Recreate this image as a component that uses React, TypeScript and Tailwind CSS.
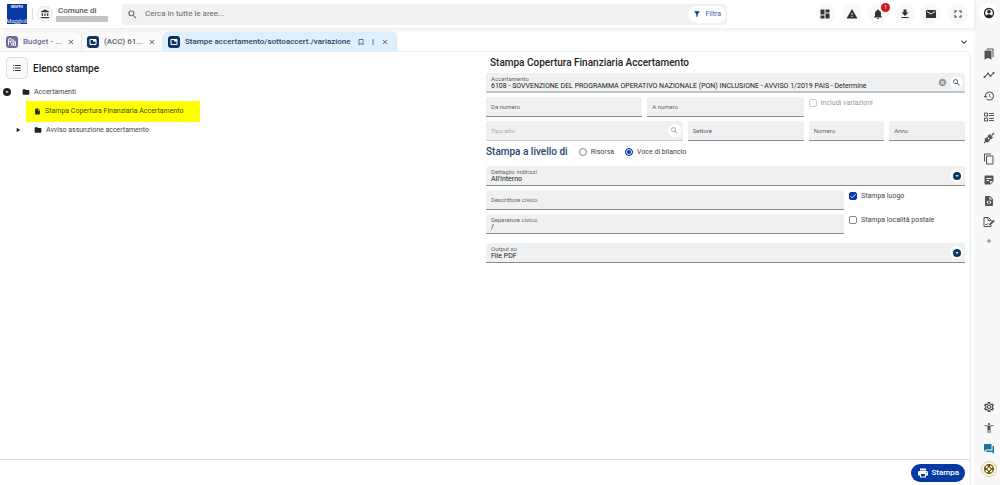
import { useState } from 'react';
import type { ReactNode } from 'react';
import {
  MdAccessibilityNew,
  MdAccountBalance,
  MdAdd,
  MdArrowDropDown,
  MdBookmarkBorder,
  MdBookmarks,
  MdCancel,
  MdCheck,
  MdClose,
  MdContentCopy,
  MdDashboard,
  MdEmail,
  MdFileDownload,
  MdFilterAlt,
  MdFolder,
  MdFormatListBulleted,
  MdForum,
  MdFullscreen,
  MdHistory,
  MdInsertDriveFile,
  MdKeyboardArrowDown,
  MdMoreVert,
  MdNotifications,
  MdOutlineSettings,
  MdPlayArrow,
  MdPrint,
  MdSearch,
  MdStickyNote2,
  MdSupport,
  MdTimeline,
  MdWarning,
} from 'react-icons/md';

function AccountIcon() {
  return (
    <svg viewBox="0 0 24 24" className="size-3">
      <circle cx="12" cy="12" r="9" fill="none" stroke="currentColor" strokeWidth="2.600" />
      <circle cx="12" cy="9.500" r="3.600" fill="currentColor" />
      <path d="M5 18q3-3.500 7-3.500t7 3.500q-3 3-7 3t-7-3z" fill="currentColor" />
    </svg>
  );
}

function PlugIcon() {
  return (
    <svg viewBox="0 0 24 24" className="size-3" fill="currentColor">
      <path d="M13 4 20 11 17 14Q15 15 13.500 13.500L10.500 10.500Q9 9 10 7Z" />
      <path d="M4 13 6.500 10.500 13.500 17.500 11 20Q8 22 5 19Q2 16 4 13Z" />
      <path
        d="M17 7 22 2M6 18 2 22M8 12.500 10.500 10M11.500 16 14 13.500"
        fill="none"
        stroke="currentColor"
        strokeWidth="2.400"
      />
    </svg>
  );
}

function BallotIcon() {
  return (
    <svg viewBox="0 0 24 24" className="size-3" fill="none" stroke="currentColor" strokeWidth="2">
      <path d="M3 4h6v6H3zM3 14h6v6H3zM12 5h10M12 9h10M12 15h10M12 19h10" />
    </svg>
  );
}

function FileCodeIcon() {
  return (
    <svg viewBox="0 0 24 24" className="size-3" fill="currentColor" fillRule="evenodd">
      <path d="M5 2h9l6 6v12a2 2 0 0 1-2 2H6a2 2 0 0 1-2-2V4a2 2 0 0 1 1-2zM13 3.500V9h5.500zM10.500 11 7 14.500l3.500 3.500 1.200-1.200-2.300-2.300 2.300-2.300zM13.500 11l-1.200 1.200 2.300 2.300-2.300 2.300 1.200 1.200L17 14.500z" />
    </svg>
  );
}

function FileSignIcon() {
  return (
    <svg viewBox="0 0 24 24" className="size-3" fill="none" stroke="currentColor" strokeWidth="2">
      <path d="M16 10V8l-5-5H2v18h14v-3M10 3v6h6M5 17h3l2-2 2 2h3" />
      <path d="M14 16.500 22 9" strokeWidth="4" />
    </svg>
  );
}

function BookIcon() {
  return (
    <svg viewBox="0 0 24 24" className="size-3 shrink-0">
      <rect width="24" height="24" rx="6" fill="#6f6a98" />
      <path
        d="M5 19V8q0-3 3-3t3 3-3 3H5M8 11l3 4v4M14 6v13M14 12q0-2 2.500-2t2.500 2v7h-2.500q-2.500 0-2.500-2.500t2.500-2.500H19"
        fill="none"
        stroke="#fff"
        strokeWidth="1.800"
      />
    </svg>
  );
}

function FolderBadge() {
  return (
    <svg viewBox="0 0 24 24" className="size-3 shrink-0">
      <rect width="24" height="24" rx="6" fill="#0c3564" />
      <path d="M6 7h12v10H6z" fill="none" stroke="#fff" strokeWidth="2" strokeLinejoin="round" />
      <path d="M12 7h6v4h-6z" fill="#fff" />
    </svg>
  );
}

function Header() {
  const actions = [
    { name: 'Dashboard', icon: <MdDashboard /> },
    { name: 'Avvisi', icon: <MdWarning /> },
    { name: 'Notifiche', icon: <MdNotifications />, badge: '1' },
    { name: 'Download', icon: <MdFileDownload /> },
    { name: 'Messaggi', icon: <MdEmail /> },
    { name: 'Schermo intero', icon: <MdFullscreen /> },
  ];

  return (
    <header className="relative flex h-7 items-center bg-white pr-[6px] pl-[7px] shadow-[0_1px_5px_rgba(0,0,0,0.1)]">
      <div className="flex h-5 w-5 flex-col items-center justify-between overflow-hidden bg-[#0639a3] text-white">
        <span className="pt-px text-[3px] leading-[4px] font-bold">GRUPPO</span>
        <span className="font-['Liberation_Serif',serif] text-[6px] leading-[6px]">Maggioli</span>
      </div>
      <div className="ml-[5px] h-3 w-px bg-[#dddddd]" />
      <div className="ml-1 flex size-4 items-center justify-center rounded-full border border-[#e2e2e2] text-[#333]">
        <MdAccountBalance className="size-[10px]" />
      </div>
      <div className="ml-[3px] w-[66px]">
        <p className="pl-[2px] text-[8px] leading-[9px] font-medium text-[#555]">Comune di</p>
        <div className="mt-px h-[6px] w-[52px] bg-[#c4c4c4]" />
      </div>
      <div className="flex h-[21px] max-w-[605px] flex-1 items-center rounded-[4px] bg-[#f1f2f3] pr-px pl-[5px]">
        <MdSearch className="size-[11px] text-[#555]" />
        <input
          aria-label="Cerca"
          placeholder="Cerca in tutte le aree..."
          className="ml-[7px] min-w-0 flex-1 text-[8px] outline-none placeholder:text-[#666]"
        />
        <button className="flex h-[17px] items-center gap-1 rounded-full bg-white px-[5px] text-[7px] text-[#3c5ba5]">
          <MdFilterAlt className="size-2 text-[#0639a3]" />
          Filtra
        </button>
      </div>
      <div className="ml-auto flex w-[153px] justify-between">
        {actions.map((a) => (
          <button
            key={a.name}
            aria-label={a.name}
            className="relative flex size-5 items-center justify-center rounded-full bg-[#f8f8f8] text-[12px] text-[#333]"
          >
            {a.icon}
            {a.badge ? (
              <span className="absolute -top-px right-[-2px] flex size-[9px] items-center justify-center rounded-full bg-[#d01717] text-[5px] leading-none text-white">
                {a.badge}
              </span>
            ) : null}
          </button>
        ))}
      </div>
    </header>
  );
}

interface TabProps {
  icon: ReactNode;
  title: string;
  active?: boolean;
  muted?: boolean;
}

function Tab({ icon, title, active, muted }: TabProps) {
  return (
    <div
      className={`flex h-[19px] items-center rounded-t-[5px] pl-[5px] shadow-[1px_0_2px_rgba(0,0,0,0.12)] ${
        active ? 'w-[233px] bg-[#deeffd] pr-[7px]' : 'w-20 bg-[#fafafa] pr-[6px]'
      }`}
    >
      {icon}
      <button
        className={`ml-[5px] flex-1 text-left text-[8px] font-medium whitespace-nowrap ${
          active ? 'text-[#25476a]' : muted ? 'text-[#6f6a98]' : 'text-[#54616e]'
        }`}
      >
        {title}
      </button>
      {active ? (
        <div className="mr-1 flex gap-1 text-[8px] text-[#25476a]">
          <button aria-label="Segnalibro">
            <MdBookmarkBorder />
          </button>
          <button aria-label="Altro">
            <MdMoreVert />
          </button>
        </div>
      ) : null}
      <button aria-label="Chiudi" className="text-[8px] text-[#44576b]">
        <MdClose />
      </button>
    </div>
  );
}

function Tree() {
  return (
    <section className="pt-[5px] pl-[6px]">
      <div className="flex items-center gap-[5px]">
        <button
          aria-label="Elenco"
          className="flex size-[22px] items-center justify-center rounded-[4px] border border-[#dedede] bg-[#fafafa] text-[#333]"
        >
          <MdFormatListBulleted className="size-[10px]" />
        </button>
        <h2 className="text-[10px] font-medium text-[#222]">Elenco stampe</h2>
      </div>
      <ul className="mt-1 text-[7px] text-[#444]">
        <li className="flex h-[18px] items-center">
          <button
            aria-label="Comprimi"
            className="-ml-[3px] flex size-2 items-center justify-center rounded-full bg-[#222] text-white"
          >
            <MdArrowDropDown className="size-2" />
          </button>
          <MdFolder className="ml-[11px] size-2 text-[#222]" />
          <span className="ml-1">Accertamenti</span>
        </li>
        <li className="ml-5 flex h-[21px] w-[174px] items-center bg-[#ffff00] pl-2 text-[#3f4a00]">
          <MdInsertDriveFile className="size-[7px] text-[#183000]" />
          <a href="#stampa" className="ml-1">
            Stampa Copertura Finanziaria Accertamento
          </a>
        </li>
        <li className="flex h-4 items-center pl-2">
          <MdPlayArrow className="size-2 text-[#222]" />
          <MdFolder className="ml-3 size-2 text-[#222]" />
          <span className="ml-1">Avviso assunzione accertamento</span>
        </li>
      </ul>
    </section>
  );
}

interface FieldProps {
  label: string;
  value?: string;
  className: string;
  disabled?: boolean;
  children?: ReactNode;
}

function Field({ label, value, className, disabled, children }: FieldProps) {
  return (
    <div
      className={`flex h-5 items-center rounded-t-[3px] border-b bg-[#eef0f1] pr-[2px] pl-[5px] ${
        disabled ? 'border-[#cfcfcf]' : 'border-[#888b90]'
      } ${className}`}
    >
      {value ? (
        <label className="flex min-w-0 flex-1 flex-col text-[6px] leading-[7px] text-[#666]">
          {label}
          <input defaultValue={value} className="h-2 w-full text-[7px] leading-2 text-[#222] outline-none" />
        </label>
      ) : (
        <input
          aria-label={label}
          placeholder={label}
          disabled={disabled}
          className={`w-full min-w-0 flex-1 text-[6px] outline-none ${
            disabled ? 'placeholder:text-[#aaa]' : 'placeholder:text-[#666]'
          }`}
        />
      )}
      {children}
    </div>
  );
}

function SelectField({ label, options, className }: { label: string; options: string[]; className: string }) {
  return (
    <label
      className={`relative flex h-5 flex-col justify-center rounded-t-[3px] border-b border-[#888b90] bg-[#eef0f1] pl-[5px] text-[6px] leading-[7px] text-[#666] ${className}`}
    >
      {label}
      <select className="h-2 w-full appearance-none text-[7px] leading-2 text-[#222] outline-none">
        {options.map((o) => (
          <option key={o}>{o}</option>
        ))}
      </select>
      <span className="pointer-events-none absolute top-[3px] right-[2px] flex size-[13px] items-center justify-center rounded-full bg-white">
        <span className="flex size-2 items-center justify-center rounded-full bg-[#0c3564] text-white">
          <MdArrowDropDown className="size-2" />
        </span>
      </span>
    </label>
  );
}

function CheckField({ label, checked, disabled }: { label: string; checked?: boolean; disabled?: boolean }) {
  return (
    <label
      className={`flex h-3 items-center gap-1 text-[7px] whitespace-nowrap ${
        disabled ? 'text-[#999]' : 'text-[#444]'
      }`}
    >
      <span className="relative flex size-2">
        <input
          type="checkbox"
          defaultChecked={checked}
          disabled={disabled}
          className="peer size-2 appearance-none rounded-[2px] border border-[#888] checked:border-[#0639a3] checked:bg-[#0639a3] disabled:border-[#ccc]"
        />
        <MdCheck className="pointer-events-none absolute inset-0 hidden size-2 text-white peer-checked:block" />
      </span>
      {label}
    </label>
  );
}

function PrintForm() {
  const [level, setLevel] = useState('Voce di bilancio');

  return (
    <form className="pr-[5px] pl-px" onSubmit={(e) => e.preventDefault()}>
      <h2 className="pt-1 pl-1 text-[10px] leading-[14px] font-medium text-[#222]">
        Stampa Copertura Finanziaria Accertamento
      </h2>
      <div className="mt-[3px] grid grid-cols-12 gap-x-[5px] gap-y-1">
        <Field
          label="Accertamento"
          value="6108 - SOVVENZIONE DEL PROGRAMMA OPERATIVO NAZIONALE (PON) INCLUSIONE - AVVISO 1/2019 PAIS - Determine"
          className="col-span-12 border-b-2 !border-[#c2c3c5]"
        >
          <button aria-label="Cancella">
            <MdCancel className="size-[9px] text-[#999]" />
          </button>
          <button
            aria-label="Cerca accertamento"
            className="ml-[3px] flex size-[13px] items-center justify-center rounded-full bg-white"
          >
            <MdSearch className="size-[9px] text-[#25476a]" />
          </button>
        </Field>
        <Field label="Da numero" className="col-span-4" />
        <Field label="A numero" className="col-span-4" />
        <div className="col-span-4">
          <CheckField label="Includi variazioni" disabled />
        </div>
        <Field label="Tipo atto" className="col-span-5" disabled>
          <button
            aria-label="Cerca tipo atto"
            disabled
            className="flex size-[13px] items-center justify-center rounded-full bg-white"
          >
            <MdSearch className="size-[9px] text-[#999]" />
          </button>
        </Field>
        <Field label="Settore" className="col-span-3" />
        <Field label="Numero" className="col-span-2" />
        <Field label="Anno" className="col-span-2" />
      </div>

      <fieldset className="mt-1 flex h-[14px] items-center text-[7px] text-[#444]">
        <legend className="float-left mr-[11px] text-[10px] leading-[14px] font-medium text-[#25476a]">
          Stampa a livello di
        </legend>
        {['Risorsa', 'Voce di bilancio'].map((name) => (
          <label key={name} className="mr-[11px] flex items-center gap-1">
            <input
              type="radio"
              name="level"
              checked={level === name}
              onChange={() => setLevel(name)}
              className="size-2 appearance-none rounded-full border border-[#888] checked:border-[#0639a3] checked:bg-[#0639a3] checked:shadow-[inset_0_0_0_1px_#fff]"
            />
            {name}
          </label>
        ))}
      </fieldset>

      <div className="mt-[7px] grid grid-cols-12 gap-x-[5px] gap-y-1">
        <SelectField label="Dettaglio indirizzi" options={["All'interno"]} className="col-span-12" />
        <Field label="Descrittore civico" className="col-span-9" />
        <div className="col-span-3">
          <CheckField label="Stampa luogo" checked />
        </div>
        <Field label="Separatore civico" value="/" className="col-span-9" />
        <div className="col-span-3">
          <CheckField label="Stampa località postale" />
        </div>
        <SelectField label="Output su" options={['File PDF']} className="col-span-12 mt-[5px]" />
      </div>
    </form>
  );
}

function SideBar() {
  const tools = [
    { name: 'Segnalibri', icon: <MdBookmarks /> },
    { name: 'Andamento', icon: <MdTimeline /> },
    { name: 'Cronologia', icon: <MdHistory /> },
    { name: 'Attività', icon: <BallotIcon /> },
    { name: 'Collegamenti', icon: <PlugIcon /> },
    { name: 'Copia', icon: <MdContentCopy /> },
    { name: 'Note', icon: <MdStickyNote2 /> },
    { name: 'Codice', icon: <FileCodeIcon /> },
    { name: 'Firma', icon: <FileSignIcon /> },
  ];

  return (
    <aside className="flex w-[26px] shrink-0 flex-col items-center bg-[#f8f8f8] pl-[3px] text-[12px] text-[#555]">
      <button
        aria-label="Profilo"
        className="mt-[3px] flex size-5 items-center justify-center rounded-full bg-white text-[#222]"
      >
        <AccountIcon />
      </button>
      <div className="mt-5 flex flex-col">
        {tools.map((t) => (
          <button key={t.name} aria-label={t.name} className="flex h-[21px] items-center">
            {t.icon}
          </button>
        ))}
        <button aria-label="Aggiungi" className="flex h-[18px] items-center justify-center text-[8px] text-[#0c4594]">
          <MdAdd />
        </button>
      </div>
      <div className="mt-auto mb-2 flex flex-col items-center">
        <button aria-label="Impostazioni" className="flex h-[21px] items-center text-[#333]">
          <MdOutlineSettings />
        </button>
        <button aria-label="Accessibilità" className="flex h-[21px] items-center">
          <MdAccessibilityNew />
        </button>
        <button aria-label="Chat" className="flex h-[21px] items-center text-[#16789c]">
          <MdForum />
        </button>
        <button
          aria-label="Assistenza"
          className="mt-[2px] flex size-4 items-center justify-center rounded-full border border-[#d8cfa4] bg-[#fdf8e4] text-[#6b5608]"
        >
          <MdSupport />
        </button>
      </div>
    </aside>
  );
}

export default function App() {
  return (
    <div className="flex min-h-screen bg-white font-[Roboto,sans-serif]">
      <div className="flex min-w-0 flex-1 flex-col">
        <Header />
        <nav className="mt-1 flex items-center gap-px pr-1 pl-px">
          <Tab icon={<BookIcon />} title="Budget - ..." muted />
          <Tab icon={<FolderBadge />} title="(ACC) 61..." />
          <Tab icon={<FolderBadge />} title="Stampe accertamento/sottoaccert./variazione" active />
          <button aria-label="Altre schede" className="ml-auto text-[12px] text-[#25476a]">
            <MdKeyboardArrowDown />
          </button>
        </nav>
        <div className="mr-[3px] flex flex-1 flex-col rounded-tr-[6px] border-t border-r border-[#e3f1fb]">
          <main className="grid flex-1 grid-cols-2">
            <Tree />
            <PrintForm />
          </main>
          <footer className="flex h-[26px] items-center justify-end border-t border-[#dcdcdc] pr-[5px]">
            <button className="flex h-[18px] items-center gap-[2px] rounded-full bg-[#0639a3] px-[6px] text-[8px] font-medium text-white">
              <MdPrint className="size-3" />
              Stampa
            </button>
          </footer>
        </div>
      </div>
      <SideBar />
    </div>
  );
}
